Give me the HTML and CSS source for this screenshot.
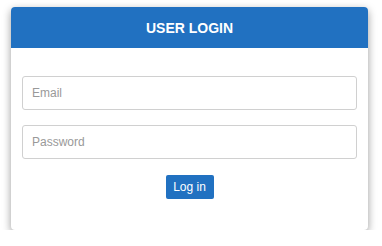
FILE: index.html
```html
<!DOCTYPE html>
<html lang="en">
  <head>
    <meta charset="utf-8">
    <title>User Login</title>
    <link rel="stylesheet" href="styles.css">
  </head>
  <body>
    <div class="login-box">
      <div class="login-header">
        <h1>USER LOGIN</h1>
      </div>
      <form class="login-form">
        <input class="field" type="text" placeholder="Email">
        <input class="field" type="password" placeholder="Password">
        <div class="actions">
          <button class="login-btn" type="button">Log in</button>
        </div>
      </form>
    </div>
  </body>
</html>
```

FILE: styles.css
```css
body {
  margin: 0;
  padding: 7px 0 0 11px;
  background: #fff;
  font-family: "Liberation Sans", Arial, sans-serif;
}

.login-box {
  width: 357px;
  height: 223px;
  background: #fff;
  border-radius: 4px;
  box-shadow: 0 3px 9px rgba(0, 0, 0, 0.4);
  overflow: hidden;
}

.login-header {
  height: 41px;
  background: #2171c1;
  display: flex;
  align-items: center;
  justify-content: center;
}

.login-header h1 {
  margin: 0;
  color: #fff;
  font-size: 14px;
  font-weight: bold;
}

.login-form {
  display: flex;
  flex-direction: column;
  gap: 15px;
  padding: 28px 11px 0 11px;
}

.field {
  box-sizing: border-box;
  width: 335px;
  height: 34px;
  padding: 0 9px;
  border: 1px solid #d0d0d0;
  border-radius: 3px;
  font-family: "Liberation Sans", Arial, sans-serif;
  font-size: 12px;
  color: #555;
}

.field::placeholder {
  color: #999;
}

.actions {
  display: flex;
  justify-content: center;
  padding-top: 1px;
}

.login-btn {
  width: 48px;
  height: 24px;
  padding: 0;
  border: none;
  border-radius: 2px;
  background: #2171c1;
  color: #fff;
  font-family: "Liberation Sans", Arial, sans-serif;
  font-size: 12px;
}
```
